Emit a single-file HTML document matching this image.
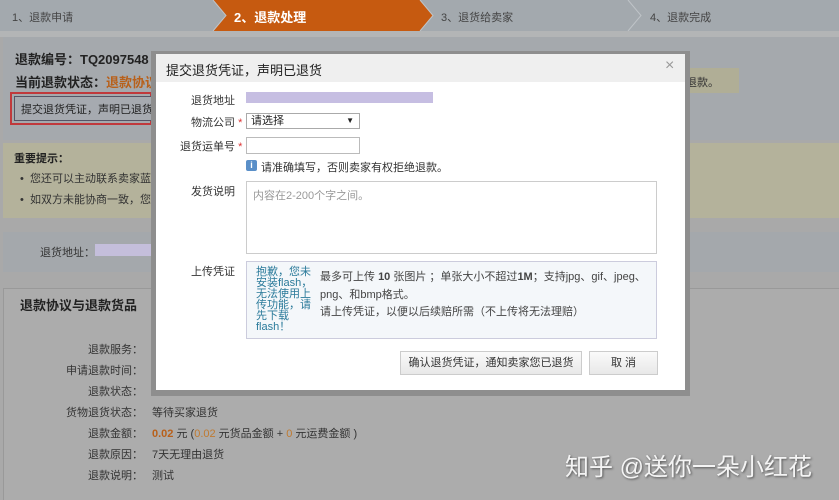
<!DOCTYPE html>
<html><head><meta charset="utf-8">
<style>
*{margin:0;padding:0;box-sizing:border-box}
body{width:839px;height:500px;overflow:hidden;background:#a9a9a9;font-family:"Liberation Sans","Noto Sans CJK SC",sans-serif;font-size:11px;color:#333;position:relative}
.a{position:absolute;white-space:nowrap}
</style></head><body>
<div class="a" style="left:0;top:0;width:839px;height:31px;background:#a3a9ae"></div>
<svg class="a" style="left:0;top:0" width="839" height="31">
<polygon points="213,0 420,0 433,15.5 420,31 213,31 226,15.5" fill="#c65a10"/>
<polyline points="420,0 433,15.5 420,31" fill="none" stroke="#bfc4c8" stroke-width="1"/>
<polyline points="628,0 641,15.5 628,31" fill="none" stroke="#bfc4c8" stroke-width="1"/>
<polyline points="213,0 226,15.5 213,31" fill="none" stroke="#bfc4c8" stroke-width="1"/>
</svg>
<div class="a" style="left:12px;top:9px;color:#444">1、退款申请</div>
<div class="a" style="left:234px;top:7px;color:#fff;font-size:13px;font-weight:bold">2、退款处理</div>
<div class="a" style="left:441px;top:9px;color:#444">3、退货给卖家</div>
<div class="a" style="left:650px;top:9px;color:#444">4、退款完成</div>
<div class="a" style="left:0;top:31px;width:839px;height:6px;background:#b3b5b6"></div>
<div class="a" style="left:3px;top:37px;width:836px;height:103px;background:#a5a9ad"></div>
<div class="a" style="left:15px;top:49px;font-size:13px;font-weight:bold;color:#222">退款编号：TQ2097548</div>
<div class="a" style="left:15px;top:72px;font-size:13px;font-weight:bold;color:#222">当前退款状态：<span style="color:#b8601a">退款协议</span></div>
<div class="a" style="left:10px;top:92px;width:142px;height:33px;border:2px solid #c0393c"></div>
<div class="a" style="left:14px;top:96px;width:138px;height:25px;border:1px solid #556;background:#a6aab0;padding:4px 6px;color:#222">提交退货凭证，声明已退货</div>
<div class="a" style="left:675px;top:68px;width:64px;height:25px;background:#b0ae96;padding:6px 0 0 0;color:#333">已退款。</div>
<div class="a" style="left:3px;top:143px;width:836px;height:75px;background:#b4b29b"></div>
<div class="a" style="left:14px;top:150px;font-weight:bold;color:#222">重要提示：</div>
<div class="a" style="left:20px;top:170px;color:#333">•&nbsp;&nbsp;您还可以主动联系卖家蓝</div>
<div class="a" style="left:20px;top:191px;color:#333">•&nbsp;&nbsp;如双方未能协商一致，您</div>
<div class="a" style="left:3px;top:232px;width:836px;height:40px;background:#a4a8ac"></div>
<div class="a" style="left:40px;top:244px">退货地址：</div>
<div class="a" style="left:95px;top:244px;width:60px;height:12px;background:#c4bedb"></div>
<div class="a" style="left:3px;top:288px;width:836px;height:212px;background:#acacac;border-top:1px solid #999;border-left:1px solid #999"></div>
<div class="a" style="left:20px;top:295px;font-size:13px;font-weight:bold;color:#222">退款协议与退款货品</div>
<div class="a" style="left:0;top:340px;width:143px;text-align:right;line-height:21px;color:#333">退款服务：<br>申请退款时间：<br>退款状态：<br>货物退货状态：<br>退款金额：<br>退款原因：<br>退款说明：</div>
<div class="a" style="left:152px;top:403px;line-height:21px;color:#333">等待买家退货<br><span style="color:#b8601a;font-weight:bold">0.02</span> 元 (<span style="color:#c07a30">0.02</span> 元货品金额 + <span style="color:#c07a30">0</span> 元运费金额 )<br>7天无理由退货<br>测试</div>
<div class="a" style="left:565px;top:447px;font-size:24px;color:#f4f4f4;text-shadow:1px 1px 2px #555">知乎 @送你一朵小红花</div>
<div class="a" style="left:151px;top:51px;width:539px;height:345px;background:#8e8e8e"></div>
<div class="a" style="left:156px;top:54px;width:529px;height:336px;background:#fff"></div>
<div class="a" style="left:156px;top:54px;width:529px;height:28px;background:#efefef"></div>
<div class="a" style="left:166px;top:60px;font-size:13px;color:#222">提交退货凭证，声明已退货</div>
<div class="a" style="left:665px;top:57px;font-size:16px;color:#999">×</div>
<div class="a" style="left:191px;top:92px">退货地址</div>
<div class="a" style="left:246px;top:92px;width:187px;height:11px;background:#c6bee2"></div>
<div class="a" style="left:191px;top:114px">物流公司 <span style="color:#d33">*</span></div>
<div class="a" style="left:246px;top:113px;width:114px;height:16px;border:1px solid #aaa;padding:0 4px;line-height:14px;color:#222">请选择<span style="position:absolute;right:5px;top:0;font-size:8px">▼</span></div>
<div class="a" style="left:180px;top:138px">退货运单号 <span style="color:#d33">*</span></div>
<div class="a" style="left:246px;top:137px;width:114px;height:17px;border:1px solid #bbb"></div>
<div class="a" style="left:246px;top:160px;width:11px;height:11px;background:#5a8fc8;border-radius:2px;color:#fff;font-size:9px;text-align:center;line-height:11px;font-weight:bold">i</div>
<div class="a" style="left:261px;top:159px;color:#333">请准确填写，否则卖家有权拒绝退款。</div>
<div class="a" style="left:191px;top:183px">发货说明</div>
<div class="a" style="left:246px;top:181px;width:411px;height:73px;border:1px solid #ccc;padding:5px 6px;color:#999">内容在2-200个字之间。</div>
<div class="a" style="left:191px;top:263px">上传凭证</div>
<div class="a" style="left:246px;top:261px;width:411px;height:78px;border:1px solid #ccd;background:#f4f7fa"></div>
<div class="a" style="left:256px;top:267px;color:#2a7a9a;font-size:11px;line-height:11px">抱歉，您未<br>安装flash，<br>无法使用上<br>传功能，请<br>先下载<br>flash！</div>
<div class="a" style="left:320px;top:269px;line-height:17.5px;color:#444">最多可上传 <b>10</b> 张图片 ；单张大小不超过<b>1M</b>；支持jpg、gif、jpeg、<br>png、和bmp格式。<br>请上传凭证，以便以后续赔所需（不上传将无法理赔）</div>
<div class="a" style="left:400px;top:351px;width:182px;height:24px;border:1px solid #ccc;background:linear-gradient(#fafafa,#e8e8e8);text-align:center;line-height:22px;color:#333">确认退货凭证，通知卖家您已退货</div>
<div class="a" style="left:589px;top:351px;width:69px;height:24px;border:1px solid #ccc;background:linear-gradient(#fafafa,#e8e8e8);text-align:center;line-height:22px;color:#333">取 消</div>
</body></html>
